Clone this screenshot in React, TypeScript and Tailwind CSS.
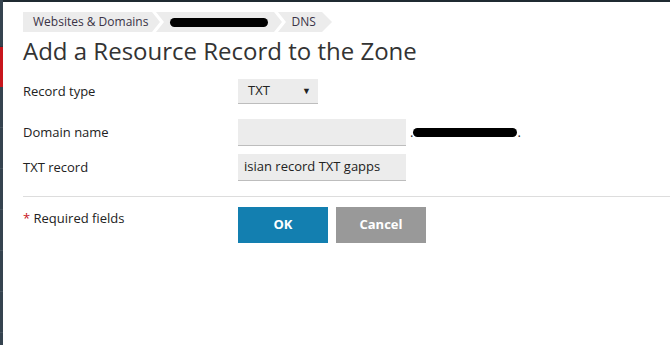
const font = { fontFamily: '"Open Sans", "Liberation Sans", sans-serif' };

function Crumb({ children, className }: { children: React.ReactNode; className: string }) {
  return (
    <div className={`flex h-5 items-center bg-[#ececec] text-[12px] text-[#3a3346] ${className}`}>
      {children}
    </div>
  );
}

function Sep({ last }: { last?: boolean }) {
  return (
    <svg width={last ? 10 : 14} height={20} viewBox={last ? '0 0 10 20' : '0 0 14 20'} className="block">
      <polygon points={last ? '0,0 10,10 0,20' : '0,0 8,10 0,20'} fill="#ececec" />
      {!last && <polygon points="4,0 14,0 14,20 4,20 12,10" fill="#ececec" />}
    </svg>
  );
}

export default function App() {
  const sidebarRows = [41, 41, 41, 41, 41, 41, 41];
  return (
    <div className="flex h-[345px] w-[670px] overflow-hidden bg-white text-[#222]" style={font}>
      <div className="flex w-[3px] shrink-0 flex-col bg-[#35434f]">
        <div className="h-[47px] shrink-0 border-b border-[#2b3640]" />
        <div className="h-[40px] shrink-0 bg-[#c8161d]" />
        {sidebarRows.map((h, i) => (
          <div key={i} style={{ height: h }} className="shrink-0 border-b border-[#46535e]" />
        ))}
      </div>

      <div className="flex flex-1 flex-col">
        <div className="h-[2px] bg-[#1f2a31]" />
        <div className="pl-5 pt-[10px]">
          <div className="flex items-center">
            <Crumb className="pl-[10px] pr-[4px]">Websites &amp; Domains</Crumb>
            <Sep />
            <Crumb className="pl-[4px] pr-[6px]">
              <span className="inline-block h-[9px] w-[98px] rounded-full bg-black" />
            </Crumb>
            <Sep />
            <Crumb className="pl-[3px] pr-[6px]">DNS</Crumb>
            <Sep last />
          </div>

          <h1 className="mt-[3px] text-[24px] leading-[32px] text-[#333]">Add a Resource Record to the Zone</h1>
        </div>

        <div className="mt-[12px] pl-5 text-[13px]">
          <div className="flex items-center">
            <div className="w-[215px]">Record type</div>
            <div className="flex h-[25px] w-[80px] items-center justify-between border-b border-[#bdbdbd] bg-[#ececec] pl-[10px] pr-[7px]">
              <span>TXT</span>
              <span className="text-[9px]">▼</span>
            </div>
          </div>

          <div className="mt-[15px] flex items-center">
            <div className="w-[215px]">Domain name</div>
            <div className="h-[27px] w-[168px] border-b border-[#bdbdbd] bg-[#ececec]" />
            <span className="ml-[4px] flex items-center">
              .<span className="inline-block h-[9px] w-[104px] rounded-full bg-black" />.
            </span>
          </div>

          <div className="mt-[8px] flex items-center">
            <div className="w-[215px]">TXT record</div>
            <div className="flex h-[27px] w-[168px] items-center border-b border-[#bdbdbd] bg-[#ececec] pl-[6px]">
              isian record TXT gapps
            </div>
          </div>
        </div>

        <div className="ml-5 mt-[15px] border-t border-[#dddddd]" />

        <div className="flex pl-5 pt-[10px] text-[13px]">
          <div className="w-[215px] pt-[2px]">
            <span className="text-[#c8161d]">*</span> Required fields
          </div>
          <div className="flex gap-2">
            <button className="h-[36px] w-[90px] bg-[#137fb0] font-bold text-white">OK</button>
            <button className="h-[36px] w-[90px] bg-[#999999] font-bold text-white">Cancel</button>
          </div>
        </div>
      </div>
    </div>
  );
}
